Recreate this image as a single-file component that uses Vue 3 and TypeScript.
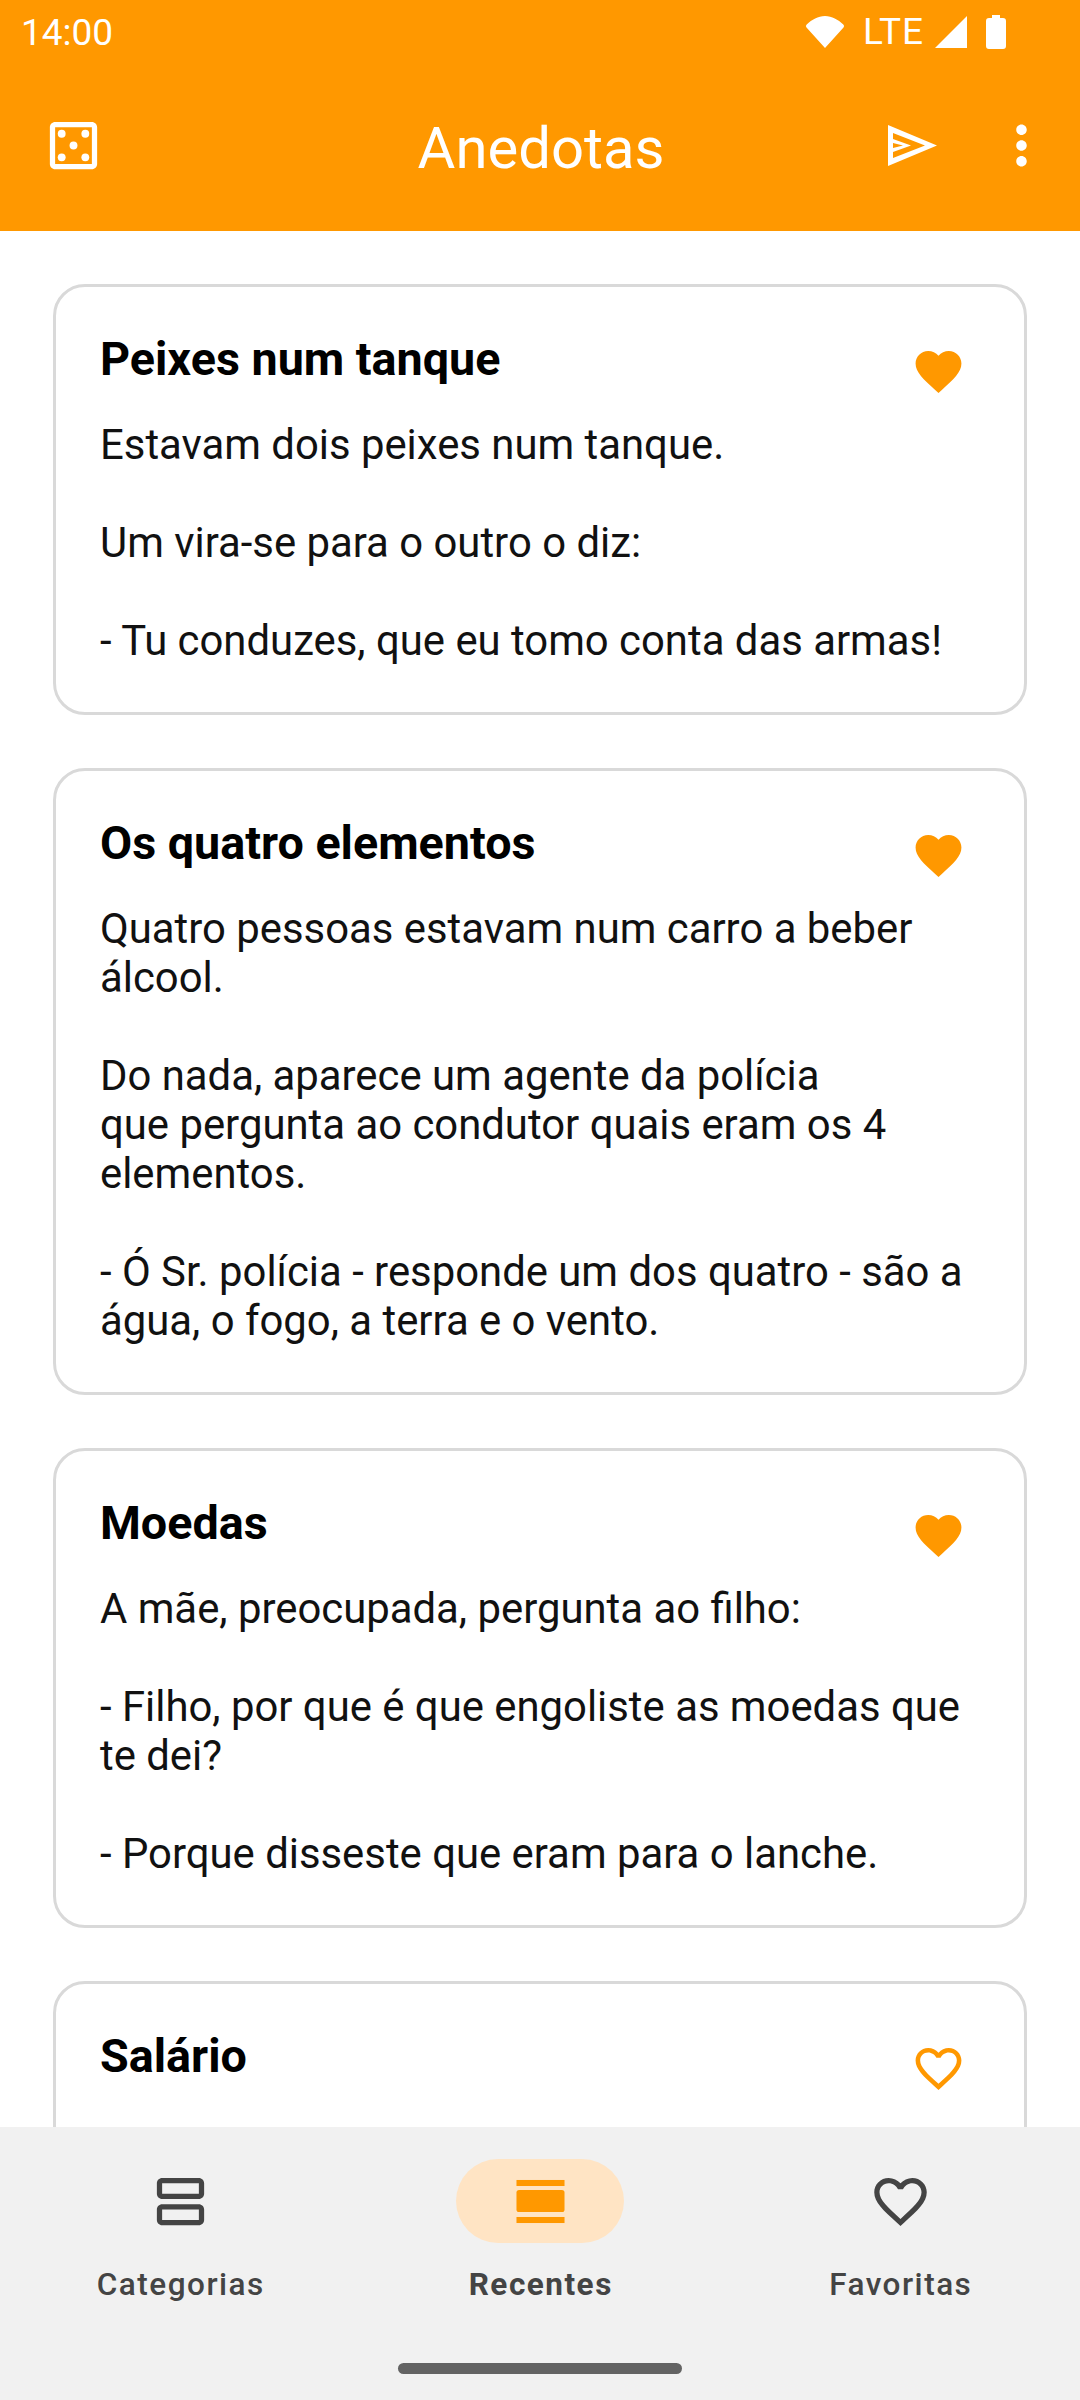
<script setup lang="ts">
interface Joke {
  title: string
  lines: string[]
  fav: boolean
}
const jokes: Joke[] = [
  {
    title: 'Peixes num tanque',
    lines: ['Estavam dois peixes num tanque.', '', 'Um vira-se para o outro o diz:', '', '- Tu conduzes, que eu tomo conta das armas!'],
    fav: true,
  },
  {
    title: 'Os quatro elementos',
    lines: ['Quatro pessoas estavam num carro a beber álcool.', '', 'Do nada, aparece um agente da polícia', 'que pergunta ao condutor quais eram os 4 elementos.', '', '- Ó Sr. polícia - responde um dos quatro - são a água, o fogo, a terra e o vento.'],
    fav: true,
  },
  {
    title: 'Moedas',
    lines: ['A mãe, preocupada, pergunta ao filho:', '', '- Filho, por que é que engoliste as moedas que te dei?', '', '- Porque disseste que eram para o lanche.'],
    fav: true,
  },
  {
    title: 'Salário',
    lines: ['Um empregado pede aumento.'],
    fav: false,
  },
]
</script>

<template>
  <div class="app">
    <header class="top">
      <div class="status">
        <span class="time">14:00</span>
        <div class="status-icons">
          <svg class="wifi" viewBox="0 0 40 32"><path d="M20 32 1.500 11.500a2 2 0 0 1 .2-2.900C7 3.500 13 0 20 0s13 3.500 18.300 8.600a2 2 0 0 1 .2 2.900z" /></svg>
          <span class="lte">LTE</span>
          <svg class="signal" viewBox="0 0 32 32"><path d="M32 0v32H0z" /></svg>
          <svg class="battery" viewBox="0 0 20 34"><path d="M6 0h8v3h3a3 3 0 0 1 3 3v25a3 3 0 0 1-3 3H3a3 3 0 0 1-3-3V6a3 3 0 0 1 3-3h3z" /></svg>
        </div>
      </div>
      <div class="toolbar">
        <svg class="tool-icon dice" viewBox="0 0 24 24">
          <path d="M19 3H5c-1.100 0-2 .9-2 2v14c0 1.100.9 2 2 2h14c1.100 0 2-.9 2-2V5c0-1.100-.9-2-2-2zm0 16H5V5h14v14z" />
          <circle cx="7.500" cy="16.500" r="1.500" />
          <circle cx="7.500" cy="7.500" r="1.500" />
          <circle cx="12" cy="12" r="1.500" />
          <circle cx="16.500" cy="16.500" r="1.500" />
          <circle cx="16.500" cy="7.500" r="1.500" />
        </svg>
        <h1 class="title">Anedotas</h1>
        <svg class="tool-icon send" viewBox="0 0 55 55">
          <path fill-rule="evenodd" d="M3 7 52 27.500 3 48zM8 15v6l18 6.500L8 34v6l32-12.500zM8 25v5l10-2.500z" />
        </svg>
        <svg class="tool-icon more" viewBox="0 0 24 24">
          <path d="M12 8c1.100 0 2-.9 2-2s-.9-2-2-2-2 .9-2 2 .9 2 2 2zm0 2c-1.100 0-2 .9-2 2s.9 2 2 2 2-.9 2-2-.9-2-2-2zm0 6c-1.100 0-2 .9-2 2s.9 2 2 2 2-.9 2-2-.9-2-2-2z" />
        </svg>
      </div>
    </header>

    <main class="list">
      <article v-for="joke in jokes" :key="joke.title" class="card">
        <div class="card-head">
          <h2 class="card-title">{{ joke.title }}</h2>
          <svg class="heart" viewBox="0 0 24 24">
            <path v-if="joke.fav" d="M12 21.350l-1.450-1.320C5.400 15.360 2 12.280 2 8.500 2 5.420 4.420 3 7.500 3c1.740 0 3.410.81 4.500 2.090C13.090 3.810 14.760 3 16.500 3 19.580 3 22 5.420 22 8.500c0 3.780-3.400 6.860-8.550 11.540L12 21.350z" />
            <path v-else d="M16.500 3c-1.740 0-3.410.81-4.500 2.090C10.910 3.810 9.240 3 7.500 3 4.420 3 2 5.420 2 8.500c0 3.780 3.400 6.860 8.550 11.540L12 21.350l1.450-1.320C18.600 15.360 22 12.280 22 8.500 22 5.420 19.580 3 16.500 3zm-4.400 15.550l-.1.1-.1-.1C7.140 14.240 4 11.390 4 8.500 4 6.500 5.500 5 7.500 5c1.540 0 3.040.99 3.570 2.360h1.870C13.460 5.990 14.960 5 16.500 5c2 0 3.500 1.500 3.500 3.500 0 2.890-3.140 5.740-7.900 10.050z" />
          </svg>
        </div>
        <div class="card-body">
          <p v-for="(line, i) in joke.lines" :key="i" class="line">{{ line || '\u00a0' }}</p>
        </div>
      </article>
    </main>

    <nav class="nav">
      <div class="tabs">
        <div class="tab">
          <div class="pill">
            <svg class="nav-icon" viewBox="0 0 24 24">
              <path d="M19 13H5c-1.100 0-2 .9-2 2v4c0 1.100.9 2 2 2h14c1.100 0 2-.9 2-2v-4c0-1.100-.9-2-2-2zm0 6H5v-4h14v4z" />
              <path d="M19 3H5C3.900 3 3 3.900 3 5v4c0 1.100.9 2 2 2h14c1.100 0 2-.9 2-2V5c0-1.100-.9-2-2-2zm0 6H5V5h14v4z" />
            </svg>
          </div>
          <span class="tab-label">Categorias</span>
        </div>
        <div class="tab active">
          <div class="pill">
            <svg class="nav-icon" viewBox="0 0 24 24">
              <rect x="2.850" y="3.800" width="18.300" height="2.300" />
              <rect x="2.850" y="7.600" width="18.300" height="8.400" rx="1" />
              <rect x="2.850" y="17.900" width="18.300" height="2.300" />
            </svg>
          </div>
          <span class="tab-label">Recentes</span>
        </div>
        <div class="tab">
          <div class="pill">
            <svg class="nav-icon" viewBox="0 0 24 24">
              <path d="M16.500 3c-1.740 0-3.410.81-4.500 2.090C10.910 3.810 9.240 3 7.500 3 4.420 3 2 5.420 2 8.500c0 3.780 3.400 6.860 8.550 11.540L12 21.350l1.450-1.320C18.600 15.360 22 12.280 22 8.500 22 5.420 19.580 3 16.500 3zm-4.400 15.550l-.1.1-.1-.1C7.140 14.240 4 11.390 4 8.500 4 6.500 5.500 5 7.500 5c1.540 0 3.040.99 3.570 2.360h1.870C13.460 5.990 14.960 5 16.500 5c2 0 3.500 1.500 3.500 3.500 0 2.890-3.140 5.740-7.900 10.050z" />
            </svg>
          </div>
          <span class="tab-label">Favoritas</span>
        </div>
      </div>
      <div class="home-bar"></div>
    </nav>
  </div>
</template>

<style scoped>
.app {
  width: 1080px;
  height: 2400px;
  display: flex;
  flex-direction: column;
  overflow: hidden;
  background: #fff;
  font-family: Roboto, "Liberation Sans", sans-serif;
}
.top {
  height: 231px;
  flex: none;
  background: #ff9800;
  color: #fff;
  display: flex;
  flex-direction: column;
}
.status {
  height: 63px;
  padding: 0 74px 0 21px;
  display: flex;
  align-items: center;
  justify-content: space-between;
}
.time {
  font-size: 37px;
  line-height: 63px;
  padding-top: 2px;
}
.status-icons {
  display: flex;
  align-items: center;
}
.status-icons svg {
  fill: #fff;
}
.wifi {
  width: 40px;
  height: 32px;
}
.lte {
  font-size: 37px;
  line-height: 40px;
  letter-spacing: 1px;
  margin-left: 18px;
}
.signal {
  width: 32px;
  height: 32px;
  margin-left: 11px;
}
.battery {
  width: 20px;
  height: 34px;
  margin-left: 19px;
}
.toolbar {
  flex: 1;
  display: flex;
  align-items: center;
  padding: 0 27px 4px 42px;
}
.tool-icon {
  width: 63px;
  height: 63px;
  fill: #fff;
  flex: none;
}
.title {
  flex: 1;
  margin: 0;
  font-size: 58px;
  font-weight: 400;
  text-align: center;
  padding: 6px 0 0 92px;
}
.send {
  width: 55px;
  height: 55px;
  margin-right: 50px;
}
.list {
  flex: 1;
  min-height: 0;
  overflow: hidden;
  padding: 53px 53px 0;
  display: flex;
  flex-direction: column;
  gap: 53px;
}
.card {
  flex: none;
  border: 3px solid #d9d9d9;
  border-radius: 32px;
  padding: 44px 42px 47px 44px;
  background: #fff;
}
.card-head {
  display: flex;
  justify-content: space-between;
  align-items: flex-start;
  padding-right: 16px;
}
.card-title {
  margin: 0;
  font-size: 46.700px;
  line-height: 56px;
  font-weight: 700;
  color: #000;
}
.heart {
  width: 55px;
  height: 55px;
  fill: #ff9800;
  flex: none;
  margin: 13px 0 0;
}
.card-body {
  margin-top: 21px;
}
.card:last-child .card-body {
  margin-top: 34px;
}
.line {
  margin: 0;
  font-size: 41.850px;
  line-height: 49px;
  color: #111;
}
.nav {
  flex: none;
  height: 273px;
  background: #f1f1f1;
  display: flex;
  flex-direction: column;
  align-items: center;
}
.tabs {
  width: 100%;
  display: flex;
  padding-top: 32px;
}
.tab {
  flex: 1;
  display: flex;
  flex-direction: column;
  align-items: center;
}
.pill {
  width: 168px;
  height: 84px;
  border-radius: 42px;
  display: flex;
  align-items: center;
  justify-content: center;
}
.nav-icon {
  width: 63px;
  height: 63px;
  fill: #444;
}
.tab-label {
  margin-top: 21px;
  padding-left: 1.500px;
  font-size: 31.500px;
  line-height: 42px;
  letter-spacing: 1.500px;
  color: #444;
  font-weight: 500;
}
.active .pill {
  background: #ffe4c4;
}
.active .nav-icon {
  fill: #ff9800;
}
.active .tab-label {
  font-weight: 700;
}
.home-bar {
  margin-top: 57px;
  width: 284px;
  height: 11px;
  border-radius: 6px;
  background: #636363;
}
</style>
